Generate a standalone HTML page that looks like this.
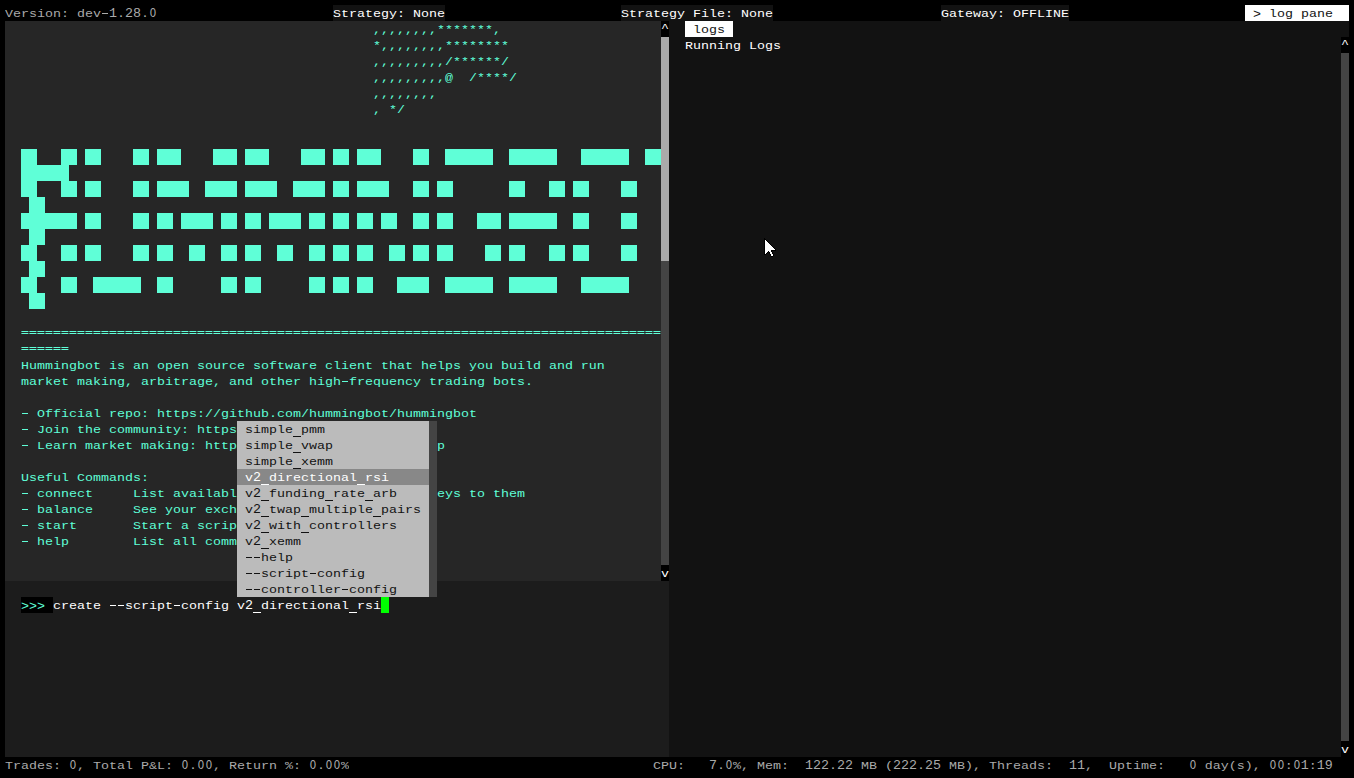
<!DOCTYPE html>
<html><head><meta charset="utf-8"><title>hummingbot</title>
<style>
html,body{margin:0;padding:0;background:#000;}
body{width:1354px;height:778px;position:relative;overflow:hidden;font-family:"Liberation Mono",monospace;font-size:13.333px;line-height:18px;color:#fff;}
span{position:absolute;white-space:pre;height:18px;display:block;transform-origin:0 12.5px;transform:scaleY(0.88);}
b,i,u,s{position:absolute;display:block;height:16px;}
s{width:8px;height:1px;}
.pane{position:absolute;}
#out{left:5px;top:21px;width:656px;height:560px;background:#262626;}
#inp{left:5px;top:581px;width:664px;height:176px;background:#1c1c1c;}
#log{left:669px;top:21px;width:680px;height:736px;background:#121212;}
.sb{position:absolute;width:8px;}
span.n{transform:none;}
span.q{transform:translateY(1px);}
span.z{transform:scaleX(0.8);transform-origin:4px 12.5px;}
.h{color:#aaaaaa;}
.d{color:#121212;}
.g{color:#5FFFD7;}
.w{color:#ffffff;}
i{background:#5FFFD7;}
u{height:1px;background:repeating-linear-gradient(90deg,rgba(95,255,215,.6) 0,rgba(95,255,215,.6) 1px,#5FFFD7 1px,#5FFFD7 7px,rgba(95,255,215,.4) 7px,rgba(95,255,215,.4) 8px);}
.menu{position:absolute;left:237px;top:421px;width:192px;height:176px;background:#bbbbbb;}
.msel{position:absolute;left:237px;top:469px;width:192px;height:16px;background:#888888;}
.msb{position:absolute;left:429px;top:421px;width:8px;height:176px;background:#444444;}
.cur{position:absolute;left:381px;top:597px;width:8px;height:16px;background:#00ff00;}
</style></head><body>
<div class="pane" id="out"></div><div class="pane" id="inp"></div><div class="pane" id="log"></div>
<div class="sb" style="left:661px;top:37px;height:224px;background:#aaaaaa"></div>
<div class="sb" style="left:661px;top:261px;height:304px;background:#444444"></div>
<div class="sb" style="left:1341px;top:53px;height:688px;background:#444444"></div>
<i style="left:21px;top:149px;width:16px"></i><i style="left:61px;top:149px;width:16px"></i><i style="left:85px;top:149px;width:16px"></i><i style="left:133px;top:149px;width:16px"></i><i style="left:157px;top:149px;width:24px"></i><i style="left:213px;top:149px;width:24px"></i><i style="left:245px;top:149px;width:24px"></i><i style="left:301px;top:149px;width:24px"></i><i style="left:333px;top:149px;width:16px"></i><i style="left:357px;top:149px;width:24px"></i><i style="left:413px;top:149px;width:16px"></i><i style="left:445px;top:149px;width:48px"></i><i style="left:509px;top:149px;width:48px"></i><i style="left:581px;top:149px;width:48px"></i><i style="left:645px;top:149px;width:16px"></i><i style="left:21px;top:165px;width:48px"></i><i style="left:21px;top:181px;width:16px"></i><i style="left:61px;top:181px;width:16px"></i><i style="left:85px;top:181px;width:16px"></i><i style="left:133px;top:181px;width:16px"></i><i style="left:157px;top:181px;width:32px"></i><i style="left:205px;top:181px;width:32px"></i><i style="left:245px;top:181px;width:32px"></i><i style="left:293px;top:181px;width:32px"></i><i style="left:333px;top:181px;width:16px"></i><i style="left:357px;top:181px;width:32px"></i><i style="left:413px;top:181px;width:16px"></i><i style="left:437px;top:181px;width:16px"></i><i style="left:509px;top:181px;width:16px"></i><i style="left:549px;top:181px;width:16px"></i><i style="left:573px;top:181px;width:16px"></i><i style="left:621px;top:181px;width:16px"></i><i style="left:29px;top:197px;width:16px"></i><i style="left:21px;top:213px;width:56px"></i><i style="left:85px;top:213px;width:16px"></i><i style="left:133px;top:213px;width:16px"></i><i style="left:157px;top:213px;width:16px"></i><i style="left:181px;top:213px;width:32px"></i><i style="left:221px;top:213px;width:16px"></i><i style="left:245px;top:213px;width:16px"></i><i style="left:269px;top:213px;width:32px"></i><i style="left:309px;top:213px;width:16px"></i><i style="left:333px;top:213px;width:16px"></i><i style="left:357px;top:213px;width:16px"></i><i style="left:381px;top:213px;width:16px"></i><i style="left:413px;top:213px;width:16px"></i><i style="left:437px;top:213px;width:16px"></i><i style="left:477px;top:213px;width:24px"></i><i style="left:509px;top:213px;width:48px"></i><i style="left:573px;top:213px;width:16px"></i><i style="left:621px;top:213px;width:16px"></i><i style="left:29px;top:229px;width:16px"></i><i style="left:21px;top:245px;width:16px"></i><i style="left:61px;top:245px;width:16px"></i><i style="left:85px;top:245px;width:16px"></i><i style="left:133px;top:245px;width:16px"></i><i style="left:157px;top:245px;width:16px"></i><i style="left:189px;top:245px;width:16px"></i><i style="left:221px;top:245px;width:16px"></i><i style="left:245px;top:245px;width:16px"></i><i style="left:277px;top:245px;width:16px"></i><i style="left:309px;top:245px;width:16px"></i><i style="left:333px;top:245px;width:16px"></i><i style="left:357px;top:245px;width:16px"></i><i style="left:389px;top:245px;width:16px"></i><i style="left:413px;top:245px;width:16px"></i><i style="left:437px;top:245px;width:16px"></i><i style="left:485px;top:245px;width:16px"></i><i style="left:509px;top:245px;width:16px"></i><i style="left:549px;top:245px;width:16px"></i><i style="left:573px;top:245px;width:16px"></i><i style="left:621px;top:245px;width:16px"></i><i style="left:29px;top:261px;width:16px"></i><i style="left:21px;top:277px;width:16px"></i><i style="left:61px;top:277px;width:16px"></i><i style="left:93px;top:277px;width:48px"></i><i style="left:157px;top:277px;width:16px"></i><i style="left:221px;top:277px;width:16px"></i><i style="left:245px;top:277px;width:16px"></i><i style="left:309px;top:277px;width:16px"></i><i style="left:333px;top:277px;width:16px"></i><i style="left:357px;top:277px;width:16px"></i><i style="left:397px;top:277px;width:32px"></i><i style="left:445px;top:277px;width:48px"></i><i style="left:509px;top:277px;width:48px"></i><i style="left:581px;top:277px;width:48px"></i><i style="left:29px;top:293px;width:16px"></i>
<s style="left:102px;top:13px;width:6px;background:#aaaaaa"></s><span class="h z" style="left:149px;top:5px">O</span><span class="h" style="left:5px;top:5px">Version: dev  .  .</span><span class="h n" style="left:109px;top:5px">1 28</span>
<b style="left:333px;top:5px;width:112px;background:#121212"></b><span class="w" style="left:333px;top:5px">Strategy: None</span>
<b style="left:621px;top:5px;width:152px;background:#121212"></b><span class="w" style="left:621px;top:5px">Strategy File: None</span>
<b style="left:941px;top:5px;width:128px;background:#121212"></b><span class="w" style="left:941px;top:5px">Gateway: OFFLINE</span>
<b style="left:1245px;top:5px;width:104px;background:#fff"></b><span class="d" style="left:1269px;top:5px">log pane</span><span class="d q" style="left:1253px;top:5px">&gt;</span>
<span class="g" style="left:373px;top:21px">,,,,,,,,*******,</span>
<span class="g" style="left:373px;top:37px">*,,,,,,,,********</span>
<span class="g" style="left:373px;top:53px">,,,,,,,,,/******/</span>
<span class="g" style="left:373px;top:69px">,,,,,,,,,@  /****/</span>
<span class="g" style="left:373px;top:85px">,,,,,,,,</span>
<span class="g" style="left:373px;top:101px">, */</span>
<u style="left:21px;top:331px;width:640px"></u>
<u style="left:21px;top:333px;width:640px"></u>
<u style="left:21px;top:347px;width:48px"></u>
<u style="left:21px;top:349px;width:48px"></u>
<span class="g" style="left:21px;top:357px">Hummingbot is an open source software client that helps you build and run</span>
<s style="left:342px;top:381px;width:6px;background:#5FFFD7"></s><span class="g" style="left:21px;top:373px">market making, arbitrage, and other high frequency trading bots.</span>
<s style="left:22px;top:413px;width:6px;background:#5FFFD7"></s><span class="g" style="left:37px;top:405px">Official repo: https://github.com/hummingbot/hummingbot</span>
<s style="left:22px;top:429px;width:6px;background:#5FFFD7"></s><span class="g" style="left:37px;top:421px">Join the community: https://discord.gg/hummingbot</span>
<s style="left:22px;top:445px;width:6px;background:#5FFFD7"></s><span class="g" style="left:37px;top:437px">Learn market making: https://hummingbot.org/botcamp</span>
<span class="g" style="left:21px;top:469px">Useful Commands:</span>
<s style="left:22px;top:493px;width:6px;background:#5FFFD7"></s><span class="g" style="left:37px;top:485px">connect     List available exchanges and add API keys to them</span>
<s style="left:22px;top:509px;width:6px;background:#5FFFD7"></s><span class="g" style="left:37px;top:501px">balance     See your exchange and wallet balances</span>
<s style="left:22px;top:525px;width:6px;background:#5FFFD7"></s><span class="g" style="left:37px;top:517px">start       Start a script or strategy</span>
<s style="left:22px;top:541px;width:6px;background:#5FFFD7"></s><span class="g" style="left:37px;top:533px">help        List all commands</span>
<div class="menu"></div><div class="msel"></div><div class="msb"></div>
<s style="left:293px;top:436px;background:#121212"></s><span class="d" style="left:245px;top:421px">simple pmm</span>
<s style="left:293px;top:452px;background:#121212"></s><span class="d" style="left:245px;top:437px">simple vwap</span>
<s style="left:293px;top:468px;background:#121212"></s><span class="d" style="left:245px;top:453px">simple xemm</span>
<s style="left:261px;top:484px;background:#ffffff"></s><s style="left:357px;top:484px;background:#ffffff"></s><span class="w" style="left:245px;top:469px">v  directional rsi</span><span class="w n" style="left:253px;top:469px">2</span>
<s style="left:261px;top:500px;background:#121212"></s><s style="left:325px;top:500px;background:#121212"></s><s style="left:365px;top:500px;background:#121212"></s><span class="d" style="left:245px;top:485px">v  funding rate arb</span><span class="d n" style="left:253px;top:485px">2</span>
<s style="left:261px;top:516px;background:#121212"></s><s style="left:301px;top:516px;background:#121212"></s><s style="left:373px;top:516px;background:#121212"></s><span class="d" style="left:245px;top:501px">v  twap multiple pairs</span><span class="d n" style="left:253px;top:501px">2</span>
<s style="left:261px;top:532px;background:#121212"></s><s style="left:301px;top:532px;background:#121212"></s><span class="d" style="left:245px;top:517px">v  with controllers</span><span class="d n" style="left:253px;top:517px">2</span>
<s style="left:261px;top:548px;background:#121212"></s><span class="d" style="left:245px;top:533px">v  xemm</span><span class="d n" style="left:253px;top:533px">2</span>
<s style="left:246px;top:557px;width:6px;background:#121212"></s><s style="left:254px;top:557px;width:6px;background:#121212"></s><span class="d" style="left:261px;top:549px">help</span>
<s style="left:246px;top:573px;width:6px;background:#121212"></s><s style="left:254px;top:573px;width:6px;background:#121212"></s><s style="left:310px;top:573px;width:6px;background:#121212"></s><span class="d" style="left:261px;top:565px">script config</span>
<s style="left:246px;top:589px;width:6px;background:#121212"></s><s style="left:254px;top:589px;width:6px;background:#121212"></s><s style="left:342px;top:589px;width:6px;background:#121212"></s><span class="d" style="left:261px;top:581px">controller config</span>
<b style="left:21px;top:597px;width:32px;background:#000"></b><span class="g q" style="left:21px;top:597px">&gt;&gt;&gt;</span>
<s style="left:110px;top:605px;width:6px;background:#ffffff"></s><s style="left:118px;top:605px;width:6px;background:#ffffff"></s><s style="left:174px;top:605px;width:6px;background:#ffffff"></s><s style="left:253px;top:612px;background:#ffffff"></s><s style="left:349px;top:612px;background:#ffffff"></s><span class="w" style="left:53px;top:597px">create   script config v  directional rsi</span><span class="w n" style="left:245px;top:597px">2</span>
<div class="cur"></div>
<b style="left:685px;top:21px;width:48px;background:#fff"></b><span class="d" style="left:693px;top:21px">logs</span>
<span class="w" style="left:685px;top:37px">Running Logs</span>
<span class="h z" style="left:69px;top:757px">O</span><span class="h z" style="left:181px;top:757px">O</span><span class="h z" style="left:197px;top:757px">O</span><span class="h z" style="left:205px;top:757px">O</span><span class="h z" style="left:309px;top:757px">O</span><span class="h z" style="left:325px;top:757px">O</span><span class="h z" style="left:333px;top:757px">O</span><span class="h" style="left:5px;top:757px">Trades:  , Total P&amp;L:  .  , Return %:  .  %</span>
<span class="h z" style="left:725px;top:757px">O</span><span class="h z" style="left:1189px;top:757px">O</span><span class="h z" style="left:1269px;top:757px">O</span><span class="h z" style="left:1277px;top:757px">O</span><span class="h z" style="left:1293px;top:757px">O</span><span class="h" style="left:653px;top:757px">CPU:    . %, Mem:     .   MB (   .   MB), Threads:    ,  Uptime:     day(s),   :  :</span><span class="h n" style="left:709px;top:757px">7           122 22     222 25                11                           1 19</span>
<b style="left:661px;top:21px;width:8px;background:#000"></b><span class="w" style="left:661px;top:19px">^</span>
<b style="left:661px;top:565px;width:8px;background:#000"></b><span class="w" style="left:661px;top:565px">v</span>
<b style="left:1341px;top:37px;width:8px;background:#000"></b><span class="w" style="left:1341px;top:35px">^</span>
<b style="left:1341px;top:741px;width:8px;background:#000"></b><span class="w" style="left:1341px;top:741px">v</span>
<svg style="position:absolute;left:764px;top:238px" width="12" height="19" shape-rendering="crispEdges"><rect x="0" y="0" width="1" height="1" fill="#000"/><rect x="0" y="1" width="2" height="1" fill="#000"/><rect x="0" y="2" width="1" height="1" fill="#000"/><rect x="1" y="2" width="1" height="1" fill="#fff"/><rect x="2" y="2" width="1" height="1" fill="#000"/><rect x="0" y="3" width="1" height="1" fill="#000"/><rect x="1" y="3" width="2" height="1" fill="#fff"/><rect x="3" y="3" width="1" height="1" fill="#000"/><rect x="0" y="4" width="1" height="1" fill="#000"/><rect x="1" y="4" width="3" height="1" fill="#fff"/><rect x="4" y="4" width="1" height="1" fill="#000"/><rect x="0" y="5" width="1" height="1" fill="#000"/><rect x="1" y="5" width="4" height="1" fill="#fff"/><rect x="5" y="5" width="1" height="1" fill="#000"/><rect x="0" y="6" width="1" height="1" fill="#000"/><rect x="1" y="6" width="5" height="1" fill="#fff"/><rect x="6" y="6" width="1" height="1" fill="#000"/><rect x="0" y="7" width="1" height="1" fill="#000"/><rect x="1" y="7" width="6" height="1" fill="#fff"/><rect x="7" y="7" width="1" height="1" fill="#000"/><rect x="0" y="8" width="1" height="1" fill="#000"/><rect x="1" y="8" width="7" height="1" fill="#fff"/><rect x="8" y="8" width="1" height="1" fill="#000"/><rect x="0" y="9" width="1" height="1" fill="#000"/><rect x="1" y="9" width="8" height="1" fill="#fff"/><rect x="9" y="9" width="1" height="1" fill="#000"/><rect x="0" y="10" width="1" height="1" fill="#000"/><rect x="1" y="10" width="9" height="1" fill="#fff"/><rect x="10" y="10" width="1" height="1" fill="#000"/><rect x="0" y="11" width="1" height="1" fill="#000"/><rect x="1" y="11" width="10" height="1" fill="#fff"/><rect x="11" y="11" width="1" height="1" fill="#000"/><rect x="0" y="12" width="1" height="1" fill="#000"/><rect x="1" y="12" width="6" height="1" fill="#fff"/><rect x="7" y="12" width="5" height="1" fill="#000"/><rect x="0" y="13" width="1" height="1" fill="#000"/><rect x="1" y="13" width="3" height="1" fill="#fff"/><rect x="4" y="13" width="1" height="1" fill="#000"/><rect x="5" y="13" width="2" height="1" fill="#fff"/><rect x="7" y="13" width="1" height="1" fill="#000"/><rect x="0" y="14" width="1" height="1" fill="#000"/><rect x="1" y="14" width="2" height="1" fill="#fff"/><rect x="3" y="14" width="1" height="1" fill="#000"/><rect x="5" y="14" width="1" height="1" fill="#000"/><rect x="6" y="14" width="2" height="1" fill="#fff"/><rect x="8" y="14" width="1" height="1" fill="#000"/><rect x="0" y="15" width="1" height="1" fill="#000"/><rect x="1" y="15" width="1" height="1" fill="#fff"/><rect x="2" y="15" width="1" height="1" fill="#000"/><rect x="5" y="15" width="1" height="1" fill="#000"/><rect x="6" y="15" width="2" height="1" fill="#fff"/><rect x="8" y="15" width="1" height="1" fill="#000"/><rect x="0" y="16" width="2" height="1" fill="#000"/><rect x="6" y="16" width="1" height="1" fill="#000"/><rect x="7" y="16" width="2" height="1" fill="#fff"/><rect x="9" y="16" width="1" height="1" fill="#000"/><rect x="6" y="17" width="1" height="1" fill="#000"/><rect x="7" y="17" width="2" height="1" fill="#fff"/><rect x="9" y="17" width="1" height="1" fill="#000"/><rect x="7" y="18" width="2" height="1" fill="#000"/></svg>
</body></html>
